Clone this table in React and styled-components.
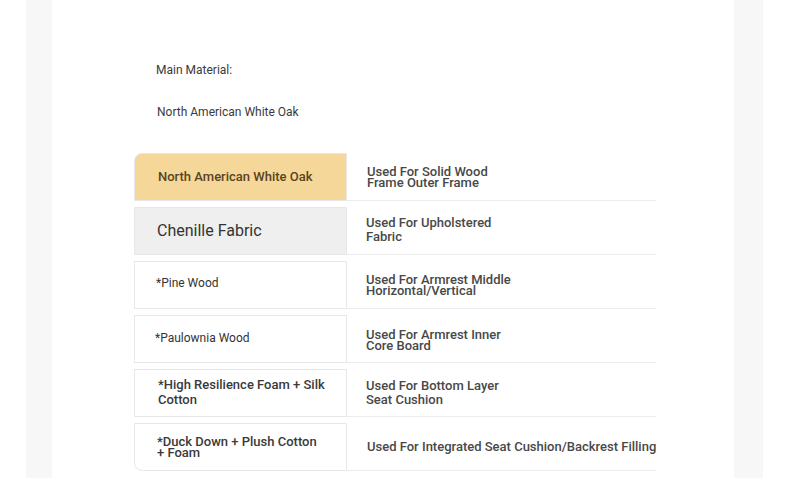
import React from "react";
import styled, { createGlobalStyle } from "styled-components";

const Global = createGlobalStyle`
  html, body { margin: 0; padding: 0; background: #fff; }
  body { font-family: Roboto, "Liberation Sans", Arial, sans-serif; }
`;

const Page = styled.div`
  width: 790px;
  height: 478px;
  overflow: hidden;
  display: flex;
  padding-left: 26px;
  box-sizing: border-box;
`;

const Gutter = styled.div`
  width: ${(p) => p.$w}px;
  flex: none;
  background: #f7f7f7;
`;

const Card = styled.div`
  width: 682px;
  flex: none;
  background: #fff;
  padding: 63px 0 0 82px;
  box-sizing: border-box;
`;

const Label = styled.div`
  font-size: 12px;
  color: #3a3a3a;
  line-height: 14px;
  margin-left: ${(p) => p.$ml}px;
  margin-bottom: ${(p) => p.$mb}px;
`;

const Table = styled.div`
  display: grid;
  grid-template-columns: 213px 309px;
  margin-top: 28px;
`;

const Row = styled.div`
  display: contents;
`;

const LeftCell = styled.div`
  margin-top: 6px;
  height: 48px;
  box-sizing: border-box;
  border: 1px solid #e8e8e8;
  background: ${(p) => p.$bg};
  color: ${(p) => p.$color};
  font-size: ${(p) => p.$fs}px;
  font-weight: ${(p) => p.$fw};
  line-height: ${(p) => p.$lh}px;
  padding: 0 19px ${(p) => p.$pb}px ${(p) => p.$pl}px;
  display: flex;
  align-items: center;
  border-radius: ${(p) => p.$radius};
`;

const RightCell = styled.div`
  height: 54px;
  box-sizing: border-box;
  border-bottom: 1px solid #ececec;
  display: flex;
  align-items: center;
  padding-left: ${(p) => p.$pl}px;
  padding-top: ${(p) => p.$pt}px;
`;

const RightText = styled.div`
  max-width: ${(p) => p.$mw}px;
  font-size: 13px;
  font-weight: 500;
  color: #484848;
  line-height: ${(p) => p.$lh}px;
  white-space: ${(p) => (p.$nowrap ? "nowrap" : "normal")};
`;

const rows = [
  {
    left: "North American White Oak",
    bg: "#f5d899",
    color: "#5a4320",
    fs: 13,
    fw: 500,
    lh: 15,
    pl: 23,
    pb: 2,
    radius: "8px 0 0 0",
    right: "Used For Solid Wood Frame Outer Frame",
    rpl: 20,
    rpt: 6,
    rmw: 125,
    rlh: 11,
  },
  {
    left: "Chenille Fabric",
    bg: "#efefef",
    color: "#333",
    fs: 16,
    fw: 400,
    lh: 18,
    pl: 22,
    pb: 0,
    radius: "0",
    right: "Used For Upholstered Fabric",
    rpl: 19,
    rpt: 4,
    rmw: 128,
    rlh: 14,
  },
  {
    left: "*Pine Wood",
    bg: "#fff",
    color: "#333",
    fs: 12,
    fw: 400,
    lh: 14,
    pl: 21,
    pb: 5,
    radius: "0",
    right: "Used For Armrest Middle Horizontal/Vertical",
    rpl: 19,
    rpt: 6,
    rmw: 150,
    rlh: 11,
  },
  {
    left: "*Paulownia Wood",
    bg: "#fff",
    color: "#333",
    fs: 12,
    fw: 400,
    lh: 14,
    pl: 20,
    pb: 3,
    radius: "0",
    right: "Used For Armrest Inner Core Board",
    rpl: 19,
    rpt: 8,
    rmw: 140,
    rlh: 11,
  },
  {
    left: "*High Resilience Foam + Silk Cotton",
    bg: "#fff",
    color: "#3a3a3a",
    fs: 13,
    fw: 500,
    lh: 15,
    pl: 23,
    pb: 3,
    radius: "0",
    right: "Used For Bottom Layer Seat Cushion",
    rpl: 19,
    rpt: 6,
    rmw: 140,
    rlh: 14,
  },
  {
    left: "*Duck Down + Plush Cotton + Foam",
    bg: "#fff",
    color: "#3a3a3a",
    fs: 13,
    fw: 500,
    lh: 11,
    pl: 22,
    pb: 1,
    radius: "0 0 0 8px",
    right: "Used For Integrated Seat Cushion/Backrest Filling",
    rpl: 20,
    rpt: 6,
    rmw: 320,
    rlh: 15,
    nowrap: true,
  },
];

export default function App() {
  return (
    <>
      <Global />
      <Page>
        <Gutter $w={26} />
        <Card>
          <Label $ml={22} $mb={28}>Main Material:</Label>
          <Label $ml={23} $mb={0}>North American White Oak</Label>
          <Table>
            {rows.map((r) => (
              <Row key={r.left}>
                <LeftCell
                  $bg={r.bg}
                  $color={r.color}
                  $fs={r.fs}
                  $fw={r.fw}
                  $lh={r.lh}
                  $pl={r.pl}
                  $pb={r.pb}
                  $radius={r.radius}
                >
                  {r.left}
                </LeftCell>
                <RightCell $pl={r.rpl} $pt={r.rpt}>
                  <RightText $mw={r.rmw} $lh={r.rlh} $nowrap={r.nowrap}>
                    {r.right}
                  </RightText>
                </RightCell>
              </Row>
            ))}
          </Table>
        </Card>
        <Gutter $w={29} />
      </Page>
    </>
  );
}
